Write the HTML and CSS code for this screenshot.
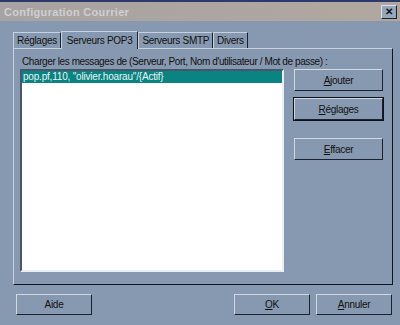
FILE: index.html
```html
<!DOCTYPE html>
<html lang="fr">
<head>
  <meta charset="UTF-8">
  <title>Configuration Courrier</title>
  <link rel="stylesheet" href="styles.css">
</head>
<body>
  <div class="dialog">
    <div class="titlebar">
      <span class="title">Configuration Courrier</span>
      <span class="close">&#x2715;</span>
    </div>

    <div class="tabs">
      <span class="tab">Réglages</span>
      <span class="tab active">Serveurs POP3</span>
      <span class="tab">Serveurs SMTP</span>
      <span class="tab">Divers</span>
    </div>

    <div class="panel">
      <div class="caption">Charger les messages de (Serveur, Port, Nom d'utilisateur / Mot de passe) :</div>
      <div class="panel-body">
        <div class="list">
          <div class="item selected">pop.pf,110, ''olivier.hoarau''/{Actif}</div>
        </div>
        <div class="side">
          <button class="btn"><u>A</u>jouter</button>
          <button class="btn default"><u>R</u>églages</button>
          <button class="btn gap"><u>E</u>ffacer</button>
        </div>
      </div>
    </div>

    <div class="footer">
      <button class="btn wide">Aide</button>
      <div class="right">
        <button class="btn wide"><u>O</u>K</button>
        <button class="btn wide"><u>A</u>nnuler</button>
      </div>
    </div>
  </div>
</body>
</html>
```

FILE: styles.css
```css
body {
  margin: 0;
  font-family: "Liberation Sans", Arial, sans-serif;
  font-size: 10px;
  letter-spacing: -0.3px;
  background: #8799b0;
}

.dialog {
  width: 400px;
  height: 325px;
  background: #8799b0;
  border-top: 2px solid #2a3a6a;
  box-sizing: border-box;
  overflow: hidden;
}

.titlebar {
  height: 19px;
  background: linear-gradient(to right, #a7a3a2, #b1a7a0);
  display: flex;
  align-items: center;
  justify-content: space-between;
  padding: 0 3px 0 4px;
}

.title {
  color: #cfcfd2;
  font-weight: bold;
  font-size: 11px;
  letter-spacing: 0.3px;
}

.close {
  width: 14px;
  height: 12px;
  background: #97a7bb;
  border: 1px solid;
  border-color: #d8e0ea #1a2230 #1a2230 #d8e0ea;
  font-size: 10px;
  font-weight: bold;
  color: #10141c;
  display: flex;
  align-items: center;
  justify-content: center;
  line-height: 1;
  letter-spacing: 0;
}

.tabs {
  display: flex;
  align-items: flex-end;
  margin: 10px 0 0 13px;
  height: 17px;
}

.tab {
  height: 15px;
  padding: 0 3px;
  line-height: 15px;
  border: 1px solid;
  border-color: #c8d2de #1a2230 transparent #c8d2de;
  border-bottom: none;
  color: #111;
}

.tab.active {
  height: 17px;
  line-height: 17px;
  padding: 0 5px;
  position: relative;
  top: 1px;
  background: #8799b0;
}

.panel {
  margin: 0 7px 0 13px;
  height: 237px;
  border: 1px solid;
  border-color: #c8d2de #101620 #101620 #c8d2de;
  padding: 7px 0 0 6px;
  box-sizing: border-box;
}

.caption {
  color: #111;
  margin-left: 2px;
  white-space: nowrap;
  letter-spacing: -0.4px;
}

.panel-body {
  display: flex;
  margin-top: 2px;
}

.list {
  width: 264px;
  height: 203px;
  background: #fff;
  border: 2px solid;
  border-color: #4a5668 #e8eef4 #e8eef4 #4a5668;
  box-sizing: border-box;
}

.item {
  height: 12px;
  line-height: 12px;
  padding-left: 1px;
  letter-spacing: -0.2px;
}

.item.selected {
  background: #0a8383;
  color: #e8f4f4;
}

.side {
  display: flex;
  flex-direction: column;
  margin-left: 10px;
}

.btn {
  width: 89px;
  height: 22px;
  margin-bottom: 7px;
  background: #8799b0;
  border: 1px solid;
  border-color: #d0d8e2 #1a2230 #1a2230 #d0d8e2;
  font-family: inherit;
  font-size: 10px;
  letter-spacing: -0.3px;
  color: #111;
  padding: 0;
}

.btn.default {
  outline: 1px solid #0c1018;
}

.btn.gap {
  margin-top: 11px;
}

.footer {
  display: flex;
  justify-content: space-between;
  margin: 9px 8px 0 16px;
}

.right {
  display: flex;
  gap: 6px;
}

.btn.wide {
  width: 76px;
  height: 21px;
  margin: 0;
}
```
